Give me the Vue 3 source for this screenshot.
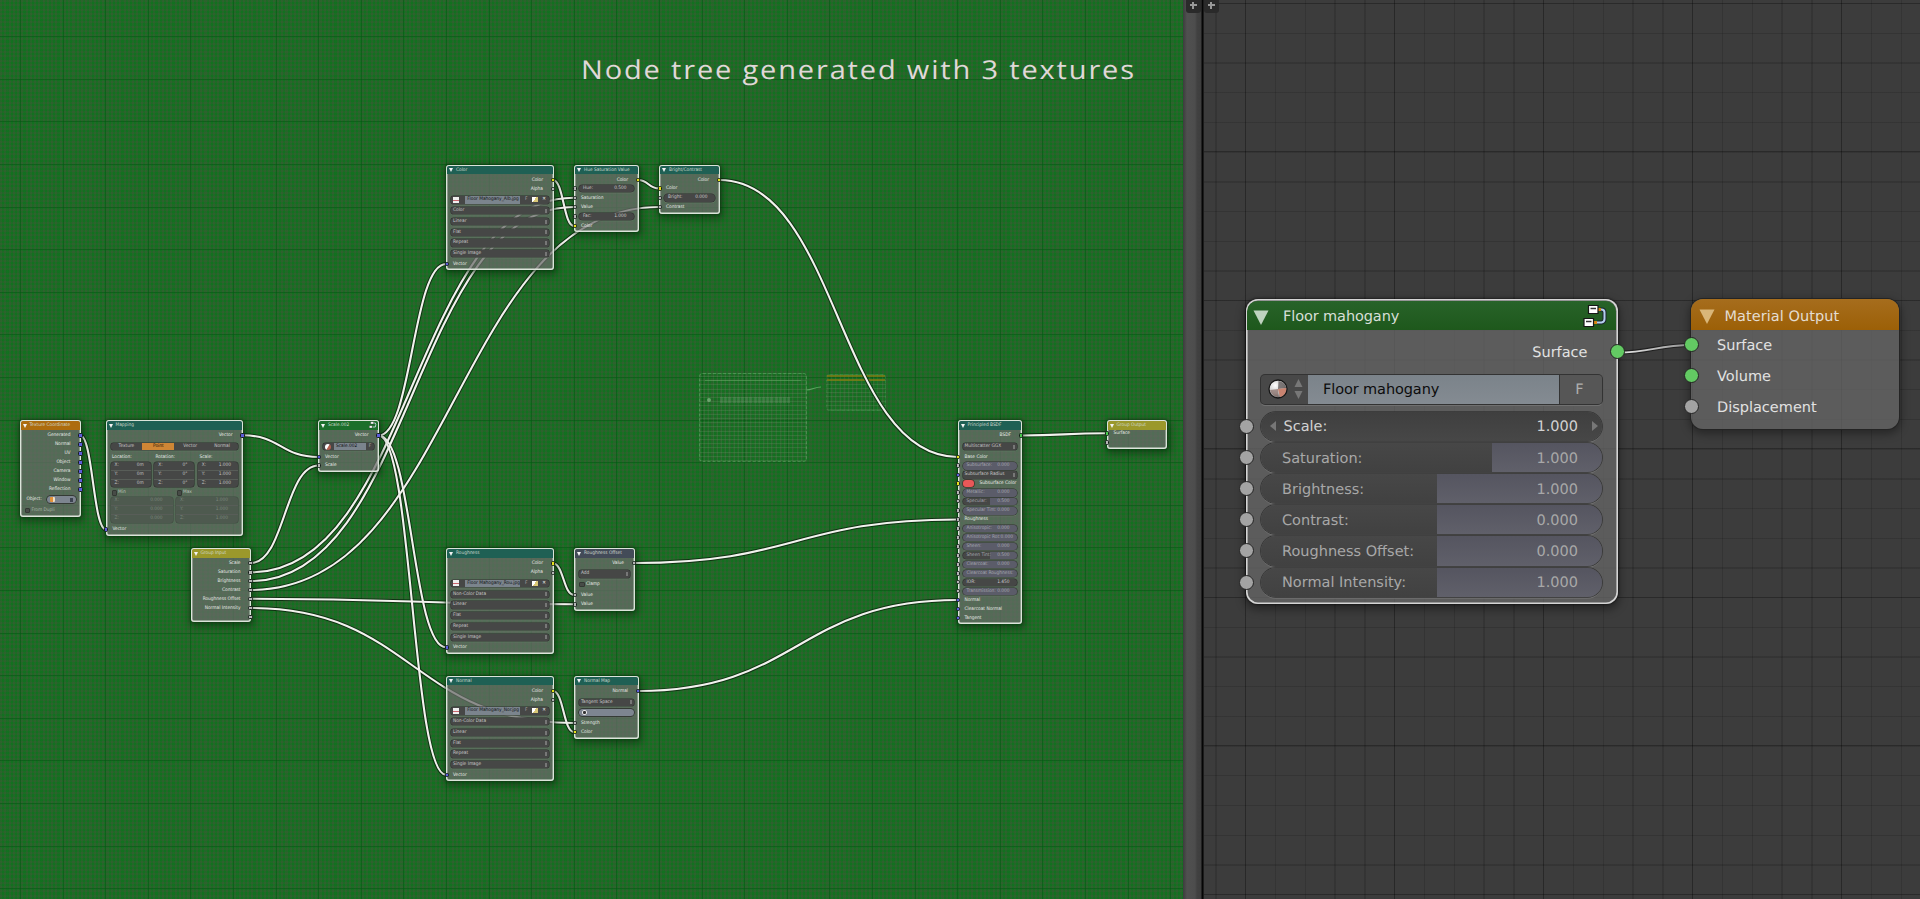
<script setup>
const small = [
  { x: 19.5, y: 420, w: 61.5, h: 97, tone: 'orange', title: 'Texture Coordinate', rows: [
    { k: 'out', t: 'Generated', y: 435.3, c: 'blue' }, { k: 'out', t: 'Normal', y: 444.5, c: 'blue' },
    { k: 'out', t: 'UV', y: 453.3, c: 'blue' }, { k: 'out', t: 'Object', y: 462.5, c: 'blue' },
    { k: 'out', t: 'Camera', y: 471.3, c: 'blue' }, { k: 'out', t: 'Window', y: 480.5, c: 'blue' },
    { k: 'out', t: 'Reflection', y: 489.3, c: 'blue' }, { k: 'object', t: 'Object:', y: 499.6 },
    { k: 'check', t: 'From Dupli', y: 510, dim: true }] },
  { x: 105.5, y: 420, w: 137.5, h: 116, tone: 'teal', title: 'Mapping', rows: [
    { k: 'out', t: 'Vector', y: 435.3, c: 'blue' },
    { k: 'tabs', y: 446 },
    { k: 'heads', y: 457 },
    { k: 'groups', y: 473.7, h: 25, vals: [['0m', '0m', '0m'], ['0°', '0°', '0°'], ['1.000', '1.000', '1.000']] },
    { k: 'checks', y: 492.4 },
    { k: 'groups', y: 510, h: 26, dim: true, vals: [['0.000', '0.000', '0.000'], ['1.000', '1.000', '1.000']] },
    { k: 'in', t: 'Vector', y: 529.5, c: 'blue' }] },
  { x: 318, y: 420, w: 61, h: 52, tone: 'green', title: 'Scale.002', group: true, rows: [
    { k: 'out', t: 'Vector', y: 435.5, c: 'blue' }, { k: 'block', t: 'Scale.002', y: 446.2 },
    { k: 'in', t: 'Vector', y: 457, c: 'blue' }, { k: 'in', t: 'Scale', y: 465.5, c: 'gray' }] },
  { x: 190.5, y: 548, w: 60.5, h: 73.5, tone: 'yellow', title: 'Group Input', rows: [
    { k: 'out', t: 'Scale', y: 563, c: 'gray' }, { k: 'out', t: 'Saturation', y: 572.3, c: 'gray' },
    { k: 'out', t: 'Brightness', y: 581, c: 'gray' }, { k: 'out', t: 'Contrast', y: 590, c: 'gray' },
    { k: 'out', t: 'Roughness Offset', y: 598.7, c: 'gray' }, { k: 'out', t: 'Normal Intensity', y: 608, c: 'gray' },
    { k: 'out', t: '', y: 617, c: 'gray' }] },
  image(164.5, 'Color', 'Floor Mahogany_Alb.jpg', 'Color'),
  image(548, 'Roughness', 'Floor Mahogany_Rou.jpg', 'Non-Color Data'),
  image(675.5, 'Normal', 'Floor Mahogany_Nor.jpg', 'Non-Color Data'),
  { x: 574, y: 164.5, w: 64.5, h: 67.5, tone: 'teal', title: 'Hue Saturation Value', rows: [
    { k: 'out', t: 'Color', y: 180, c: 'yel' }, { k: 'num', t: 'Hue:', v: '0.500', y: 188.2, c: 'gray' },
    { k: 'in', t: 'Saturation', y: 197.7, c: 'gray' }, { k: 'in', t: 'Value', y: 207, c: 'gray' },
    { k: 'num', t: 'Fac:', v: '1.000', y: 216.2, c: 'gray' }, { k: 'in', t: 'Color', y: 226, c: 'yel' }] },
  { x: 659, y: 164.5, w: 60.5, h: 49, tone: 'teal', title: 'Bright/Contrast', rows: [
    { k: 'out', t: 'Color', y: 180, c: 'yel' }, { k: 'in', t: 'Color', y: 188.4, c: 'yel' },
    { k: 'num', t: 'Bright:', v: '0.000', y: 197.6, c: 'gray' }, { k: 'in', t: 'Contrast', y: 207, c: 'gray' }] },
  { x: 574, y: 548, w: 60.5, h: 62.5, tone: 'slate', title: 'Roughness Offset', rows: [
    { k: 'out', t: 'Value', y: 563, c: 'gray' }, { k: 'sel', t: 'Add', y: 573.6 }, { k: 'check', t: 'Clamp', y: 584.3 },
    { k: 'in', t: 'Value', y: 595, c: 'gray' }, { k: 'in', t: 'Value', y: 604.3, c: 'gray' }] },
  { x: 574, y: 675.5, w: 64.5, h: 63, tone: 'teal', title: 'Normal Map', rows: [
    { k: 'out', t: 'Normal', y: 691, c: 'blue' }, { k: 'sel', t: 'Tangent Space', y: 702 }, { k: 'uv', y: 712 },
    { k: 'in', t: 'Strength', y: 723, c: 'gray' }, { k: 'in', t: 'Color', y: 732, c: 'yel' }] },
  { x: 957.5, y: 420, w: 64, h: 204, tone: 'teal', title: 'Principled BSDF', rows: [
    { k: 'out', t: 'BSDF', y: 435.5, c: 'grn' }, { k: 'sel', t: 'Multiscatter GGX', y: 446.2 },
    { k: 'in', t: 'Base Color', y: 457, c: 'yel' }, { k: 'num', t: 'Subsurface:', v: '0.000', y: 465.5, c: 'gray', f: 0 },
    { k: 'sel', t: 'Subsurface Radius', y: 474.6, c: 'blue' }, { k: 'swatch', t: 'Subsurface Color', y: 483.4, c: 'yel' },
    { k: 'num', t: 'Metallic:', v: '0.000', y: 492.5, c: 'gray', f: 0 }, { k: 'num', t: 'Specular:', v: '0.500', y: 501, c: 'gray', f: 50 },
    { k: 'num', t: 'Specular Tint:', v: '0.000', y: 510.5, c: 'gray', f: 0 }, { k: 'in', t: 'Roughness', y: 519.5, c: 'gray' },
    { k: 'num', t: 'Anisotropic:', v: '0.000', y: 528.3, c: 'gray', f: 0 }, { k: 'num', t: 'Anisotropic Rot:', v: '0.000', y: 537.2, c: 'gray', f: 0 },
    { k: 'num', t: 'Sheen:', v: '0.000', y: 546.2, c: 'gray', f: 0 }, { k: 'num', t: 'Sheen Tint:', v: '0.500', y: 555.2, c: 'gray', f: 50 },
    { k: 'num', t: 'Clearcoat:', v: '0.000', y: 564.2, c: 'gray', f: 0 }, { k: 'num', t: 'Clearcoat Roughness:', v: '', y: 573.2, c: 'gray', f: 0 },
    { k: 'num', t: 'IOR:', v: '1.450', y: 582, c: 'gray' }, { k: 'num', t: 'Transmission:', v: '0.000', y: 591, c: 'gray', f: 0 },
    { k: 'in', t: 'Normal', y: 600, c: 'blue' }, { k: 'in', t: 'Clearcoat Normal', y: 609, c: 'blue' }, { k: 'in', t: 'Tangent', y: 617.7, c: 'blue' }] },
  { x: 1106.5, y: 420, w: 60.5, h: 29, tone: 'yellow', title: 'Group Output', rows: [
    { k: 'in', t: 'Surface', y: 433.2, c: 'grn' }, { k: 'in', t: '', y: 442.3, c: 'gray' }] },
]

function image(y, title, file, space) {
  const names = [space, 'Linear', 'Flat', 'Repeat', 'Single Image']
  return { x: 446, y, w: 107.5, h: 105.5, tone: 'teal', title, rows: [
    { k: 'out', t: 'Color', y: y + 15.5, c: 'yel' }, { k: 'out', t: 'Alpha', y: y + 24.6, c: 'gray' },
    { k: 'image', t: file, y: y + 35 },
    ...names.map((t, i) => ({ k: 'sel', t, y: y + 45.9 + i * 10.7 })),
    { k: 'in', t: 'Vector', y: y + 99.3, c: 'blue' }] }
}

// Converts each row's centre line into the gap that precedes it in the column.
for (const n of small) {
  let bottom = n.y + 1
  for (const r of n.rows) {
    r.h = r.h || 7
    const top = r.y - r.h / 2 + 0.4
    r.gap = +(top - bottom).toFixed(2)
    bottom = top + r.h
  }
}

const ends = [
  [80, 435.3, 106, 529.5], [243, 435.3, 318.5, 457], [251, 563, 318.5, 465.5],
  [378.5, 435.5, 446, 264], [378.5, 435.5, 446, 647.3], [378.5, 435.5, 446, 774.8],
  [251, 572.3, 574, 197.7], [251, 581, 574, 207], [251, 590, 659, 207],
  [251, 598.7, 574, 604.3], [251, 608, 574, 723],
  [553, 180, 574, 226], [638, 180, 659, 188.4], [719.5, 180, 957.5, 457],
  [553, 563.5, 574, 595], [634.5, 563, 957.5, 519.5],
  [553, 691, 574, 732], [638.5, 691, 957.5, 600], [1021.5, 435.5, 1106.5, 433.2],
]
const links = ends.map(([a, b, c, d]) => {
  const k = (c - a) / 2
  return `M${a} ${b}C${a + k} ${b} ${c - k} ${d} ${c} ${d}`
})

const sliders = [
  { t: 'Saturation:', v: '1.000', f: 67.8 }, { t: 'Brightness:', v: '1.000', f: 51.6 },
  { t: 'Contrast:', v: '0.000', f: 51.6 }, { t: 'Roughness Offset:', v: '0.000', f: 51.6 },
  { t: 'Normal Intensity:', v: '1.000', f: 51.6 },
]
</script>

<template>
  <main class="screen">
    <section class="tree">
      <svg class="banner" width="580" height="50" viewBox="0 0 580 50">
        <text x="0" y="35" textLength="496" transform="scale(1.115 1)">Node tree generated with 3 textures</text>
      </svg>

      <div class="ghost big"><i></i><b></b><u></u></div>
      <svg class="ghostlink" width="16" height="5" viewBox="0 0 16 5"><path d="M0 4C6 4 9 1 15 1" /></svg>
      <div class="ghost little"><i></i></div>

      <svg class="links" width="1184" height="899">
        <path v-for="(d, i) in links" :key="'o' + i" :d="d" class="edge" />
        <path v-for="(d, i) in links" :key="i" :d="d" class="core" />
      </svg>

      <article v-for="n in small" :key="n.title + n.x" class="node"
        :style="{ left: n.x + 'px', top: n.y + 'px', width: n.w + 'px', height: n.h + 'px' }">
        <header :class="n.tone"><span>{{ n.title }}</span></header>
        <svg v-if="n.group" class="gicon" viewBox="0 0 24 24">
          <path d="M14 6h5q3 3 0 12h-7" fill="none" stroke="#d4dce8" stroke-width="2.5" />
          <path d="M5 2h9v7H5zM1 14h9v7H1z" fill="#fff" stroke="#222" />
        </svg>
        <div class="rows">
          <div v-for="(r, i) in n.rows" :key="i" class="row" :class="[r.k, { dim: r.dim }]"
            :style="{ marginTop: r.gap + 'px', height: r.h + 'px' }">
            <s v-if="r.c" class="sock" :class="r.c"></s>
            <template v-if="r.k === 'num'">
              <div class="field slider" :class="{ filled: r.f !== undefined }">
                <i v-if="r.f !== undefined" class="fill" :style="{ left: r.f + '%' }"></i>
                <span>{{ r.t }}</span><span>{{ r.v }}</span>
              </div>
            </template>
            <template v-else-if="r.k === 'sel'">
              <div class="field"><span>{{ r.t }}</span><em></em></div>
            </template>
            <template v-else-if="r.k === 'check'"><i class="box"></i>{{ r.t }}</template>
            <template v-else-if="r.k === 'object'">
              {{ r.t }}<div class="pill"><i></i><em></em></div>
            </template>
            <template v-else-if="r.k === 'uv'"><div class="pill"><i></i></div></template>
            <template v-else-if="r.k === 'swatch'"><i class="red"></i>{{ r.t }}</template>
            <template v-else-if="r.k === 'tabs'">
              <div class="field tabset"><span>Texture</span><span class="on">Point</span><span>Vector</span><span>Normal</span></div>
            </template>
            <template v-else-if="r.k === 'heads'"><span>Location:</span><span>Rotation:</span><span>Scale:</span></template>
            <template v-else-if="r.k === 'checks'"><span><i class="box"></i>Min</span><span><i class="box"></i>Max</span></template>
            <template v-else-if="r.k === 'groups'">
              <div v-for="(g, gi) in r.vals" :key="gi" class="cluster">
                <p v-for="(v, vi) in g" :key="vi"><span>{{ 'XYZ'[vi] }}:</span><span>{{ v }}</span></p>
              </div>
            </template>
            <template v-else-if="r.k === 'block'">
              <div class="field data"><i class="ball"></i><span class="name">{{ r.t }}</span><span class="f">F</span></div>
            </template>
            <template v-else-if="r.k === 'image'">
              <div class="field data pic">
                <i class="thumb"></i><span class="name">{{ r.t }}</span><span class="f">F</span>
                <i class="folder"></i><span class="x">✕</span>
              </div>
            </template>
            <template v-else>{{ r.t }}</template>
          </div>
        </div>
      </article>
    </section>

    <div class="divider"><span class="plus"></span></div>

    <section class="shader">
      <span class="plus"></span>
      <svg class="wire" width="76" height="14" viewBox="0 0 76 14">
        <defs><linearGradient id="fade"><stop offset="0" stop-color="#eee" /><stop offset="1" stop-color="#8c8c8c" /></linearGradient></defs>
        <path d="M0 10.5C37 10.5 37 3 76 3" stroke="#202020" stroke-width="4" />
        <path d="M0 10.5C37 10.5 37 3 76 3" stroke="url(#fade)" stroke-width="1.8" />
      </svg>

      <article class="card floor">
        <header>
          <svg class="tri" width="16" height="16"><path d="M0.5 0.5h15L8 15z" /></svg>
          <h2>Floor mahogany</h2>
          <svg class="grp" width="24" height="24" viewBox="0 0 24 24">
            <path d="M17 5.5h1.5q3 0 3 3V15q0 3-3 3.5H14" fill="none" stroke="#1c2530" stroke-width="4" />
            <path d="M17 5.5h1.5q3 0 3 3V15q0 3-3 3.5H14" fill="none" stroke="#b4cfee" stroke-width="2" />
            <path d="M14 5.5h4M10 18.5h4" stroke="#d98411" stroke-width="3" />
            <path d="M5.500 1.500h9.500v8H5.500zM1 14.500h9.500v8H1z" fill="#fff" stroke="#161616" stroke-width="1.2" />
            <path d="M7.500 4.500h5.500M3 17.500h5.500" stroke="#333" stroke-width="1.5" />
          </svg>
        </header>
        <div class="surface">Surface<s class="dot green"></s></div>
        <div class="datablock">
          <div class="pick">
            <svg width="20" height="20" viewBox="0 0 20 20">
              <defs>
                <radialGradient id="shine" cx=".35" cy=".3" r=".75"><stop offset="0" stop-color="#fff" /><stop offset=".6" stop-color="#c4c4c4" /><stop offset="1" stop-color="#666" /></radialGradient>
              </defs>
              <circle cx="10" cy="10" r="9" fill="url(#shine)" stroke="#171717" stroke-width="1.3" />
              <path d="M10 10L10.500 2q6 .5 7.800 7z" fill="#5c5656" opacity=".75" />
              <path d="M10 10l8.300-1A8.300 8.300 0 0 1 12 18z" fill="#c98370" />
              <path d="M10 10L2 11q1.500 6 8.500 7z" fill="#7a5a54" opacity=".6" />
            </svg>
            <svg width="9" height="20" viewBox="0 0 9 20"><path d="M4.5 0l4 8h-8zM4.5 20l4-8h-8z" fill="#777" /></svg>
          </div>
          <div class="dname">Floor mahogany</div>
          <div class="fake">F</div>
        </div>
        <div class="values">
          <div class="val scale"><s class="dot"></s><svg width="6" height="10"><path d="M6 0v10L0 5z" /></svg>
            <span>Scale:</span><b>1.000</b><svg width="6" height="10"><path d="M0 0v10l6-5z" /></svg></div>
          <div v-for="s in sliders" :key="s.t" class="val">
            <s class="dot"></s>
            <div class="track"><i :style="{ left: s.f + '%' }"></i></div>
            <span>{{ s.t }}</span><b>{{ s.v }}</b>
          </div>
        </div>
      </article>

      <article class="card output">
        <header><svg class="tri" width="16" height="16"><path d="M0.5 0.5h15L8 15z" /></svg><h2>Material Output</h2></header>
        <ul>
          <li><s class="dot green"></s>Surface</li>
          <li><s class="dot green"></s>Volume</li>
          <li><s class="dot"></s>Displacement</li>
        </ul>
      </article>
    </section>
  </main>
</template>

<style>
body { background: #3b3b3b; overflow: hidden; }
</style>

<style scoped>
* { box-sizing: border-box; }
s { text-decoration: none; }
.screen { display: flex; width: 1920px; height: 899px; overflow: hidden; font-family: "DejaVu Sans", sans-serif; text-rendering: geometricPrecision; }
.tree {
  position: relative; width: 1183px; height: 899px; overflow: hidden; flex: none;
  background:
    repeating-linear-gradient(90deg, transparent 0 20px, rgba(4, 84, 18, .5) 20px 21px, transparent 21px 42.6px),
    repeating-linear-gradient(180deg, transparent 0 36.3px, rgba(4, 84, 18, .5) 36.3px 37.3px, transparent 37.3px 42.6px),
    repeating-linear-gradient(90deg, rgba(62, 90, 54, .3) 0 2.1px, rgba(0, 122, 22, .22) 2.1px 4.26px),
    repeating-linear-gradient(180deg, rgba(62, 90, 54, .3) 0 2.1px, rgba(0, 122, 22, .22) 2.1px 4.26px),
    #1e6a26;
}
.banner { position: absolute; left: 581px; top: 44px; overflow: visible; }
.banner text { font-family: "Open Sans", sans-serif; font-size: 26px; fill: #e0d8d8; }
.links { position: absolute; left: 0; top: 0; }
.links path { fill: none; }
.edge { stroke: rgba(12, 40, 14, .85); stroke-width: 4; }
.core { stroke: #f2f2ee; stroke-width: 2.1; }

.ghost { position: absolute; border-radius: 4px; border: 1.5px dashed rgba(110, 180, 115, .45);
  background: repeating-linear-gradient(0deg, rgba(100, 170, 105, .22) 0 1px, transparent 1px 4.2px), repeating-linear-gradient(90deg, rgba(100, 160, 105, .14) 0 1px, transparent 1px 4.2px); }
.big { left: 698.5px; top: 373px; width: 108px; height: 89px; }
.big i { position: absolute; left: 5px; right: 5px; top: 6px; height: 1px; background: rgba(110, 180, 110, .4); }
.big b { position: absolute; left: 20px; right: 16px; top: 23px; height: 6px; background: repeating-linear-gradient(90deg, rgba(110, 160, 115, .3) 0 3px, rgba(110, 160, 115, .12) 3px 4.2px); }
.big u { position: absolute; left: 7px; top: 24px; width: 4px; height: 4px; border-radius: 2px; background: rgba(150, 200, 150, .6); }
.little { left: 826px; top: 374px; width: 60px; height: 37px; border-color: rgba(90, 160, 95, .25); }
.little i { display: block; height: 8px; background: repeating-linear-gradient(180deg, rgba(140, 125, 10, .65) 0 2px, transparent 2px 4px); }
.ghostlink { position: absolute; left: 806px; top: 386px; }
.ghostlink path { fill: none; stroke: #5ba560; stroke-width: 1.2; }

.node { position: absolute; border-radius: 3px; background: rgba(105, 107, 105, .74);
  box-shadow: inset 0 0 0 1.4px #dbe4da, 0 0 2px 1px rgba(8, 50, 12, .5), 1px 3px 7px 2px rgba(5, 40, 8, .45);
  font-family: "DejaVu Sans Condensed", "DejaVu Sans", sans-serif; font-stretch: condensed; font-size: 4.8px; line-height: 7.6px; color: #e9ece9; white-space: nowrap; }
.node > header { position: absolute; left: 1px; right: 1px; top: 1px; height: 8.5px; border-radius: 2px 2px 0 0; line-height: 9.4px; padding-left: 9px; color: #cfdacf; }
.node > header::before { content: ""; position: absolute; left: 2px; top: 2.5px; border: 2px solid transparent; border-top: 4px solid #f2f2f2; border-bottom: 0; }
.orange { background: #ad6c0e; }
.teal { background: #1f6054; }
.green { background: #1c6f2b; }
.node > header.green { background: #1c6f2b; }
.yellow { background: #9b982b; }
.slate { background: #434b58; }
.gicon { position: absolute; right: 2px; top: 1px; width: 8px; height: 8px; }
.rows { display: flex; flex-direction: column; padding-top: 1px; }
.row { position: relative; flex: none; padding: 0 5px; }
.row.out { text-align: right; padding-right: 10.5px; }
.row.in { padding-left: 7px; }
.dim { color: #a9b5a9; }
.sock { position: absolute; left: -1.5px; top: 1.1px; width: 4.4px; height: 4.4px; border-radius: 1.5px; border: .8px solid #15201a; background: #b5b5b5; z-index: 2; }
.out .sock { left: auto; right: -1.5px; }
.sock.blue { background: #5c5cd8; }
.sock.yel { background: #e4e01c; }
.sock.grn { background: #46c94c; }
.field { display: flex; align-items: center; justify-content: space-between; height: 7.2px; border-radius: 2.5px; background: #464746; box-shadow: 0 0 0 .6px #2e302e, 0 1.2px 0 rgba(120, 145, 120, .5); padding: 0 2px; overflow: hidden; color: #cacaca; position: relative; line-height: 7.2px; }
.field em { width: 1.5px; height: 4px; background: #777; }
.slider { border-radius: 4px; padding: 0 7px 0 4px; }
.num .slider span { position: relative; }
.filled { color: #a8aab2; }
.fill { position: absolute; top: 0; bottom: 0; right: 0; background: #5b5c69; }
.check { display: flex; gap: 1.5px; align-items: center; }
.box { display: inline-block; width: 5.5px; height: 5.5px; background: #474b47; border: .6px solid #333833; border-radius: 1px; flex: none; }
.object { display: flex; align-items: center; gap: 5px; padding-left: 7px; }
.pill { width: 29px; height: 7px; border-radius: 3.5px; background: #7d8590; box-shadow: 0 0 0 .7px #2a2c2a; display: flex; align-items: center; padding: 0 3px; justify-content: space-between; }
.pill i { width: 5px; height: 5px; background: #e39339; border-radius: 1px; border-right: 2px solid #f1ddc2; }
.pill em { width: 3px; height: 4px; background: #3c4350; }
.uv .pill { width: auto; }
.uv .pill i { background: #333; border: 1px solid #e8e8e8; border-radius: 2px; }
.swatch { display: flex; gap: 6px; }
.red { width: 11px; height: 6.5px; border-radius: 3px; background: #e85858; box-shadow: 0 0 0 .6px #3a2020; }
.tabset { padding: 0; }
.tabset span { flex: 1; text-align: center; }
.tabset .on { background: #cf8635; color: #1b1208; }
.heads { display: grid; grid-template-columns: 43.5px 44px 1fr; padding-left: 6.5px; }
.checks { display: grid; grid-template-columns: 65px 1fr; padding-left: 6px; color: #bac4ba; }
.checks span { display: flex; align-items: center; gap: 1px; }
.groups { display: flex; gap: 3.5px; }
.cluster { flex: 1; border-radius: 3px; background: #464746; box-shadow: 0 0 0 .6px #2e302e; display: flex; flex-direction: column; justify-content: space-around; }
.cluster p { margin: 0; padding: 0 7px 0 4px; display: flex; justify-content: space-between; line-height: 8px; color: #c2c2c2; }
.cluster p + p { border-top: .8px solid #585d58; }
.dim .cluster { background: #4e5a4f; box-shadow: 0 0 0 .6px #414c42; }
.dim .cluster p { color: #7c877d; padding-right: 10px; }
.data { padding: 0; }
.data .name { flex: 1; background: #7b848d; color: #0c0e10; padding-left: 2px; margin-left: 3px; height: 100%; overflow: hidden; }
.data .f { width: 8px; text-align: center; color: #aaa; }
.ball { width: 6px; height: 6px; border-radius: 50%; margin-left: 2px; background: linear-gradient(120deg, #fff 45%, #b26050 55%); }
.thumb { width: 6px; height: 6px; margin-left: 2px; background: linear-gradient(#eee 50%, #c9656d 50% 70%, #eee 70%); }
.folder { width: 6px; height: 5px; background: linear-gradient(120deg, #fff 45%, #d9c877 45%); }
.x { width: 9px; text-align: center; color: #eee; }
.pic .f { width: 10px; }
.pic .name { margin-left: 5px; flex: 0 0 55px; }

.divider { position: relative; width: 21px; flex: none; background: linear-gradient(90deg, #3c3c3c 0, #505050 4px, #4d4d4d 12px, #414141 14px, #3e3e3e 18px, #050505 19px 20px, #333 21px); }
.plus { position: absolute; left: 2.5px; top: 0; width: 15px; height: 12.5px; background: #2a2a2a; border-radius: 0 0 3px 3px; }
.plus::before, .plus::after { content: ""; position: absolute; left: 4px; top: 4px; width: 7px; height: 2px; background: #999; }
.plus::after { left: 6.5px; top: 1.5px; width: 2px; height: 7px; }
.shader { position: relative; flex: 1; overflow: hidden;
  background:
    repeating-linear-gradient(90deg, transparent 0 41px, rgba(0, 0, 0, .24) 41px 42.2px, transparent 42.2px 149px),
    repeating-linear-gradient(180deg, transparent 0 2.8px, rgba(0, 0, 0, .2) 2.8px 4px, transparent 4px 148.5px),
    repeating-linear-gradient(90deg, transparent 0 11.3px, rgba(0, 0, 0, .13) 11.3px 12.6px, transparent 12.6px 29.8px),
    repeating-linear-gradient(180deg, transparent 0 3px, rgba(0, 0, 0, .13) 3px 4.3px, transparent 4.3px 29.7px),
    #3c3c3c; }
.shader .plus { left: -.5px; }
.wire { position: absolute; left: 413px; top: 341.5px; }
.wire path { fill: none; }
.card { position: absolute; top: 299.3px; border-radius: 12px; background: rgba(104, 104, 104, .74); color: #e2e2e2; font-size: 14.5px; }
.floor { left: 41.5px; width: 372px; height: 305px; box-shadow: inset 0 0 0 1.6px #d4d4d4, 0 0 2px 1px rgba(0, 0, 0, .4), 0 4px 9px 2px rgba(0, 0, 0, .35); padding: 1.5px; }
.card header { display: flex; align-items: center; height: 29.5px; border-radius: 10.5px 10.5px 0 0; background: linear-gradient(#286329, #1e581c); }
.card h2 { margin: 2px 0 0; font-size: 14.5px; font-weight: 400; color: #d7dfd7; letter-spacing: -.1px; }
.tri { margin: 4px 14px 0 6px; flex: none; fill: #bfd2bf; }
.grp { margin: 0 9px 0 auto; }
.surface { position: relative; height: 44.7px; line-height: 47px; text-align: right; padding-right: 28.5px; }
.dot { position: absolute; left: -6.5px; top: 50%; margin-top: -7.5px; width: 15px; height: 15px; border-radius: 50%; background: #a3a3a3; border: 1.2px solid #242424; }
.dot.green { background: #63ca63; }
.surface .dot { left: auto; right: -8.5px; margin-top: -8.5px; }
.datablock { display: flex; height: 29px; margin: 0 14px; border-radius: 4px; overflow: hidden; box-shadow: 0 0 0 1px #333, 0 2px 0 #707070; background: #484848; line-height: 31.5px; }
.pick { width: 47px; display: flex; align-items: center; padding-left: 7px; gap: 6px; }
.dname { flex: 1; background: linear-gradient(#7b838a, #848b92); color: #0d0d0d; padding-left: 15px; letter-spacing: -.1px; }
.fake { width: 43px; text-align: center; background: #565656; color: #aeaeae; border-left: 1px solid #333; padding-right: 3px; }
.values { display: flex; flex-direction: column; gap: 2px; padding: 7.6px 14px 0; }
.val { position: relative; display: flex; align-items: center; height: 29.2px; border-radius: 14.6px; background: linear-gradient(#474747, #414141); box-shadow: 0 0 0 .8px #333, 0 1.8px 0 #707070; padding: 0 24px 0 21px; }
.val span, .val b { position: relative; font-weight: 400; color: #a8a8a8; padding-top: 2.4px; }
.val b { margin-left: auto; }
.val .dot { left: -22px; }
.val.scale { padding: 0 4px 0 9px; background: linear-gradient(#3f3f3f, #474747); }
.val.scale svg { fill: #777; flex: none; }
.val.scale span { margin-left: 7.5px; }
.val.scale span, .val.scale b { color: #d2d2d2; }
.val.scale b { margin-right: 14px; }
.track { position: absolute; inset: 0; border-radius: inherit; overflow: hidden; }
.track i { position: absolute; top: 0; bottom: 0; right: 0; background: linear-gradient(#555560, #60606a); }
.output { left: 487px; width: 208px; height: 130px; box-shadow: 0 0 0 1px #242424, 0 3px 8px 2px rgba(0, 0, 0, .35); }
.output header { height: 30.5px; border-radius: 12px 12px 0 0; background: linear-gradient(#a66d1d, #9c6007); }
.output .tri { margin: 5px 10px 0 7.5px; fill: #d9b679; }
.output h2 { color: #e4ddd2; letter-spacing: .05px; margin-top: 4px; }
.output ul { list-style: none; margin: 0; padding: 0; }
.output li { position: relative; height: 31px; line-height: 33.4px; padding-left: 26px; }
.output li .dot { left: -7.5px; margin-top: -8.5px; }
</style>
